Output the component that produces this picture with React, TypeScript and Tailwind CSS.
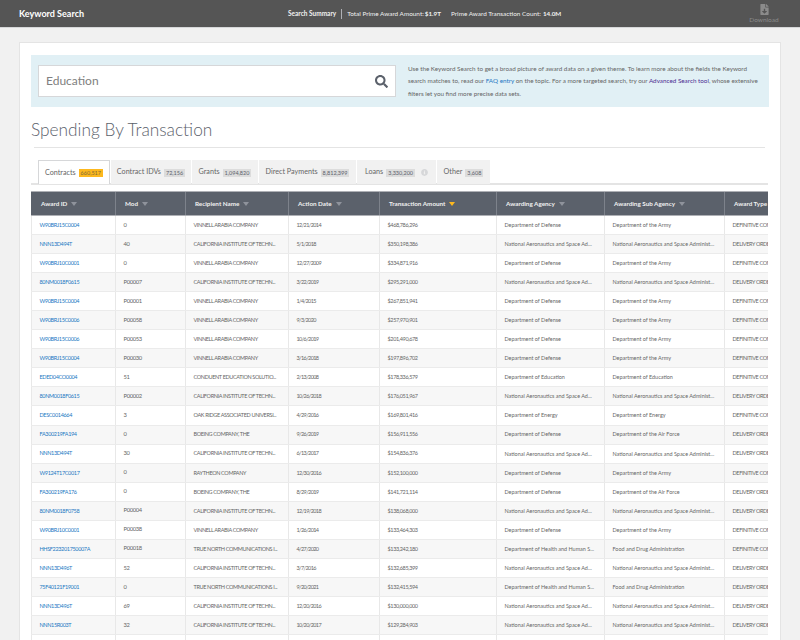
import { FaFileDownload, FaInfoCircle, FaSearch } from "react-icons/fa";

const VINNELL = "VINNELL ARABIA COMPANY";
const CALTECH = "CALIFORNIA INSTITUTE OF TECHN...";
const BOEING = "BOEING COMPANY, THE";
const TRUE_NORTH = "TRUE NORTH COMMUNICATIONS I...";
const DOD = "Department of Defense";
const NASA = "National Aeronautics and Space Ad...";
const HHS = "Department of Health and Human S...";
const ARMY = "Department of the Army";
const AIR_FORCE = "Department of the Air Force";
const NASA_SUB = "National Aeronautics and Space Administ...";
const FDA = "Food and Drug Administration";
const DEFINITIVE = "DEFINITIVE CONTRACT";
const DELIVERY = "DELIVERY ORDER";

const rows = [
    ["W90BRJ15C0004", "0", VINNELL, "12/21/2014", "$468,786,296", DOD, ARMY, DEFINITIVE],
    ["NNN13D494T", "40", CALTECH, "5/1/2018", "$350,198,386", NASA, NASA_SUB, DELIVERY],
    ["W90BRJ10C0001", "0", VINNELL, "12/27/2009", "$334,871,916", DOD, ARMY, DEFINITIVE],
    ["80NM0018F0615", "P00007", CALTECH, "3/22/2019", "$295,291,000", NASA, NASA_SUB, DELIVERY],
    ["W90BRJ15C0004", "P00001", VINNELL, "1/4/2015", "$267,851,941", DOD, ARMY, DEFINITIVE],
    ["W90BRJ15C0006", "P00058", VINNELL, "9/3/2020", "$257,970,901", DOD, ARMY, DEFINITIVE],
    ["W90BRJ15C0006", "P00053", VINNELL, "10/6/2019", "$201,490,678", DOD, ARMY, DEFINITIVE],
    ["W90BRJ15C0004", "P00030", VINNELL, "3/16/2018", "$197,896,702", DOD, ARMY, DEFINITIVE],
    ["EDED04CO0004", "51", "CONDUENT EDUCATION SOLUTIO...", "2/13/2008", "$178,336,579", "Department of Education", "Department of Education", DEFINITIVE],
    ["80NM0018F0615", "P00002", CALTECH, "10/26/2018", "$176,051,967", NASA, NASA_SUB, DELIVERY],
    ["DESC0014664", "3", "OAK RIDGE ASSOCIATED UNIVERSI...", "4/29/2016", "$169,801,416", "Department of Energy", "Department of Energy", DEFINITIVE],
    ["FA300219FA194", "0", BOEING, "9/26/2019", "$156,911,556", DOD, AIR_FORCE, DELIVERY],
    ["NNN13D494T", "30", CALTECH, "6/13/2017", "$154,836,376", NASA, NASA_SUB, DELIVERY],
    ["W9124T17C0017", "0", "RAYTHEON COMPANY", "12/30/2016", "$152,100,000", DOD, ARMY, DEFINITIVE],
    ["FA300219FA176", "0", BOEING, "8/29/2019", "$141,721,114", DOD, AIR_FORCE, DELIVERY],
    ["80NM0018F0758", "P00004", CALTECH, "12/19/2018", "$138,068,000", NASA, NASA_SUB, DELIVERY],
    ["W90BRJ10C0001", "P00038", VINNELL, "1/26/2014", "$133,464,303", DOD, ARMY, DEFINITIVE],
    ["HHSF223201750007A", "P00018", TRUE_NORTH, "4/27/2020", "$133,242,180", HHS, FDA, DEFINITIVE],
    ["NNN13D496T", "52", CALTECH, "3/7/2016", "$132,685,399", NASA, NASA_SUB, DELIVERY],
    ["75F40121F19001", "0", TRUE_NORTH, "9/20/2021", "$132,415,594", HHS, FDA, DELIVERY],
    ["NNN13D496T", "69", CALTECH, "12/20/2016", "$130,000,000", NASA, NASA_SUB, DELIVERY],
    ["NNN15R003T", "32", CALTECH, "10/20/2017", "$129,284,903", NASA, NASA_SUB, DELIVERY],
    ["", "", "", "", "", "", "", ""],
];

const columns = [
    "Award ID",
    "Mod",
    "Recipient Name",
    "Action Date",
    "Transaction Amount",
    "Awarding Agency",
    "Awarding Sub Agency",
    "Award Type",
];

// per column text size, Lato's capitals and digits run wider than the picture's
const cellText = [
    "text-[5.5px] tracking-[-0.35px] text-[#2378c3]",
    "text-[5.8px] tracking-[-0.35px]",
    "text-[5.5px] tracking-[-0.35px]",
    "text-[5.5px] tracking-[-0.6px]",
    "text-[5.5px] tracking-[-0.35px]",
    "text-[5.45px]",
    "text-[5.45px]",
    "text-[5.5px] tracking-[-0.35px]",
];

const tabs = [
    { label: "Contracts", count: "660,517", width: "w-[72px]", active: true },
    { label: "Contract IDVs", count: "72,156", width: "w-[80px]" },
    { label: "Grants", count: "1,094,820", width: "w-[66px]" },
    { label: "Direct Payments", count: "8,812,399", width: "w-[97px]" },
    { label: "Loans", count: "3,330,200", width: "w-[79px]", info: true },
    { label: "Other", count: "3,608", width: "w-[53px]" },
];

const gridCols = "grid-cols-[84px_70px_103px_91px_117px_108px_120px_44px]";

function SortCaret({ active }: { active?: boolean }) {
    return (
        <svg width="6" height="4" viewBox="0 0 6 4" className="ml-[4px] shrink-0">
            <path d="M0 0h6L3 4z" fill={active ? "#fdb81e" : "#8f939c"} />
        </svg>
    );
}

export default function App() {
    return (
        <div className="h-screen overflow-hidden bg-[#f1f1f1] font-['Lato',sans-serif] text-[#666666]">
            <header className="flex h-[28px] items-center border-b border-[#d6d7d9] bg-[#555555] pl-[19px] pr-[21px] text-white">
                <h1 className="w-[269px] text-[9px] font-bold">Keyword Search</h1>
                <div className="flex items-center text-[6.4px] text-[#f1f1f1]">
                    <span className="text-[6.5px] font-bold">Search Summary</span>
                    <span className="mx-[5px] h-[10px] w-px bg-[#aeb0b5]" />
                    <span>Total Prime Award Amount:</span>
                    <span className="ml-[1px] text-[6.3px] font-bold">$1.9T</span>
                    <span className="ml-[10px]">Prime Award Transaction Count:</span>
                    <span className="ml-[2px] text-[6.3px] font-bold">14.0M</span>
                </div>
                <div className="ml-auto flex w-[30px] flex-col items-center text-[#8b8b8b]">
                    <FaFileDownload className="h-[11px] w-[9px]" />
                    <span className="mt-[1px] text-[6.5px] leading-[8px]">Download</span>
                </div>
            </header>

            <main className="mx-[19px] mt-[14px] h-[640px] border border-[#e4e4e4] bg-white pl-[11px] pt-[12px] pr-[10px]">
                <section className="flex h-[52px] w-[738px] items-center bg-[#e1f0f5] pl-[7px]">
                    <div className="flex h-[32px] w-[358px] items-center justify-between border border-[#d6d7d9] bg-white pl-[7px] pr-[7px]">
                        <span className="text-[12px] text-[#808080]">Education</span>
                        <FaSearch className="h-[13px] w-[13px] text-[#5b616b]" />
                    </div>
                    <p className="ml-[12px] mt-[1px] whitespace-nowrap text-[6.3px] leading-[12.6px]">
                        Use the Keyword Search to get a broad picture of award data on a given theme. To learn more about the fields the Keyword
                        <br />
                        search matches to, read our <a className="text-[#2378c3]">FAQ entry</a> on the topic. For a more targeted search, try our{" "}
                        <a className="text-[#4c2c92]">Advanced Search tool</a>, whose extensive
                        <br />
                        filters let you find more precise data sets.
                    </p>
                </section>

                <h2 className="mt-[12px] h-[28px] text-[17.3px] font-light leading-[22px] text-[#5b616b]">Spending By Transaction</h2>
                <div className="mx-[3px] h-px w-[731px] bg-[#e4e4e4]" />

                <nav className="mt-[12px] flex h-[25px] w-[737px] gap-px border-b-2 border-[#e4e4e4] pl-[7px]">
                    {tabs.map((tab) => (
                        <div
                            key={tab.label}
                            className={`flex h-[24px] items-center justify-center gap-[3px] pt-[1px] text-[7.2px] ${tab.width} ${
                                tab.active ? "border border-b-0 border-[#d6d7d9] bg-white" : "bg-[#f1f1f1]"
                            }`}
                        >
                            <span>{tab.label}</span>
                            <span
                                className={`px-[2px] text-[5.5px] leading-[8px] ${
                                    tab.active ? "bg-[#fdb81e] text-[#7a6a3a]" : "bg-[#dcdcdc] text-[#5b616b]"
                                }`}
                            >
                                {tab.count}
                            </span>
                            {tab.info && <FaInfoCircle className="ml-[3px] h-[7px] w-[7px] text-[#d6d7d9]" />}
                        </div>
                    ))}
                </nav>

                <div className="mt-[6px] w-[737px] overflow-hidden">
                    <div className={`grid h-[25px] border-t border-b border-[#aeb0b5] bg-[#5b616b] ${gridCols}`}>
                        {columns.map((col, i) => (
                            <div
                                key={col}
                                className={`flex items-center whitespace-nowrap border-l border-[#7d828b] pl-[9px] text-[6.3px] font-bold text-[#f1f1f1] ${
                                    i === 0 ? "border-l-0 pl-[10px]" : ""
                                }`}
                            >
                                {col}
                                {i < 7 && <SortCaret active={i === 4} />}
                            </div>
                        ))}
                    </div>
                    {rows.map((row, r) => (
                        <div
                            key={r}
                            className={`grid h-[19.05px] border-b border-[#ebebeb] ${gridCols} ${
                                r % 2 === 1 ? "bg-[#f7f7f7]" : "bg-white"
                            }`}
                        >
                            {row.map((cell, c) => (
                                <div
                                    key={c}
                                    className={`flex items-center overflow-hidden whitespace-nowrap border-l border-[#e8e8e8] pl-[7.5px] ${cellText[c]}`}
                                >
                                    {cell}
                                </div>
                            ))}
                        </div>
                    ))}
                </div>
            </main>
        </div>
    );
}
